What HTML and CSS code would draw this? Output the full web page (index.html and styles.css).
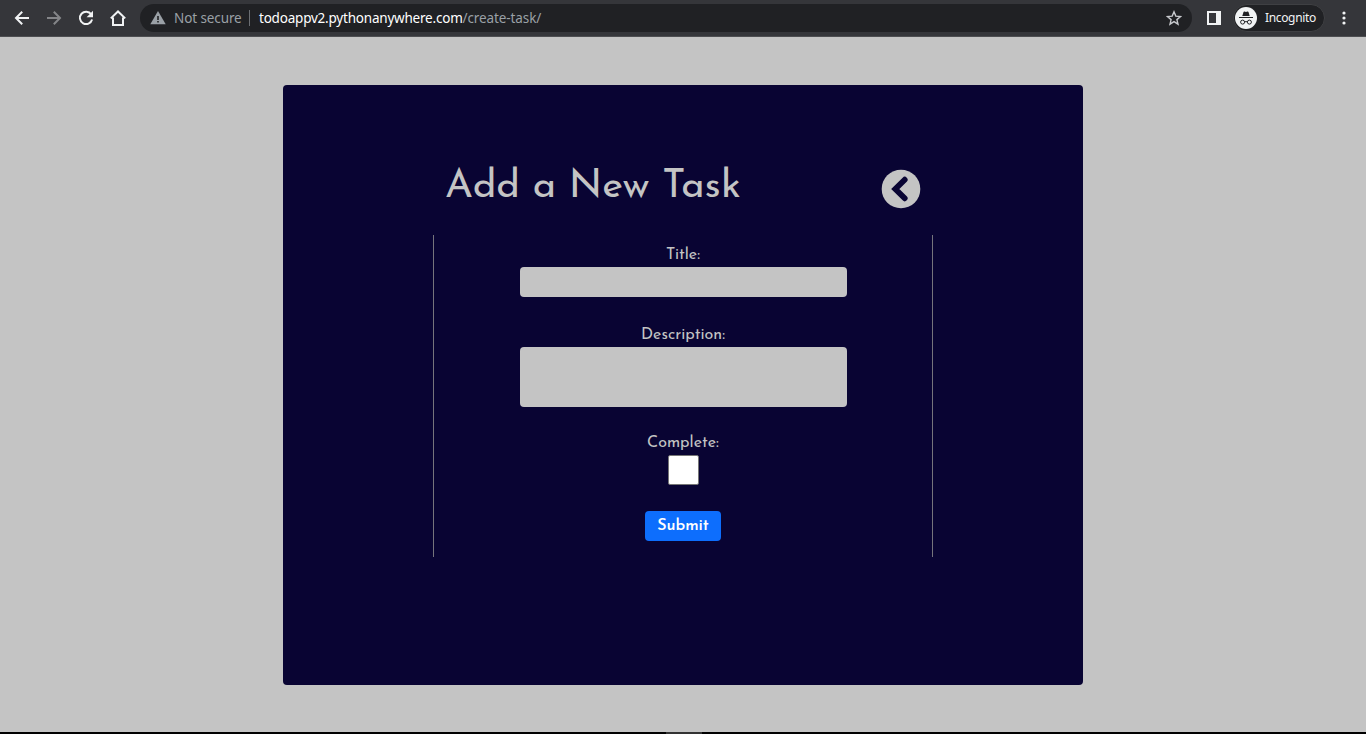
FILE: index.html
```html
<!DOCTYPE html>
<html lang="en">
<head>
<meta charset="utf-8">
<title>Add a New Task</title>
<link rel="stylesheet" href="styles.css">
</head>
<body>
<header class="toolbar">
  <nav class="nav">
    <svg width="16" height="16" viewBox="0 0 16 16"><path class="line" d="M15 8H2.5M8.2 1.7 2 8l6.2 6.3"/></svg>
    <svg class="dim" width="16" height="16" viewBox="0 0 16 16"><path class="line" d="M1 8h12.5M7.8 1.7 14 8l-6.2 6.3"/></svg>
    <svg width="16" height="16" viewBox="0 0 16 16"><path class="line" d="M13.2 4.3A6.2 6.2 0 1 0 14.1 9.5"/><path class="fill" d="M15 .8v6.4H8.6z"/></svg>
    <svg width="16" height="16" viewBox="0 0 16 16"><path class="line" d="M.8 8.4 8 1.5l7.2 6.9M3 7.5v7.4h10V7.5"/></svg>
  </nav>
  <div class="address">
    <svg class="warning" width="16" height="14" viewBox="0 0 16 14"><path fill="#9aa0a6" d="M8 0 15.7 13.3H.3z"/><path fill="#202124" d="M7.2 5h1.6v4H7.2zM7.2 10h1.6v1.6H7.2z"/></svg>
    <span class="secure">Not secure</span>
    <span class="divider"></span>
    <span class="url"><span class="host">todoappv2.pythonanywhere.com</span><span class="path">/create-task/</span></span>
    <svg class="star" width="16" height="16" viewBox="0 0 16 16"><path fill="none" stroke="#c8cace" stroke-width="1.4" d="m8 1.8 1.8 4.3 4.7.4-3.6 3.1 1.1 4.6L8 11.7l-4 2.5 1.1-4.6-3.6-3.1 4.7-.4z"/></svg>
  </div>
  <svg class="panel" width="14" height="14" viewBox="0 0 14 14"><path fill="#f1f3f4" fill-rule="evenodd" d="M0 0h14v14H0zM2 2v10h7V2z"/></svg>
  <div class="profile">
    <svg width="22" height="22" viewBox="0 0 22 22"><circle cx="11" cy="11" r="11" fill="#f1f3f4"/><path fill="#202124" d="M7.3 9 8.5 5q.3-.8 1.1-.5l1.4.4 1.4-.4q.8-.3 1.1.5L14.7 9zM4 10h14v1.1H4z"/><path fill="none" stroke="#202124" d="M9.8 14.9q1.2-.7 2.4 0"/><circle cx="7.6" cy="15.1" r="2" fill="none" stroke="#202124"/><circle cx="14.4" cy="15.1" r="2" fill="none" stroke="#202124"/></svg>
    <span class="profile-name">Incognito</span>
  </div>
  <svg class="menu" width="4" height="14" viewBox="0 0 4 14"><g fill="#f1f3f4"><circle cx="2" cy="2" r="1.6"/><circle cx="2" cy="7" r="1.6"/><circle cx="2" cy="12" r="1.6"/></g></svg>
</header>
<main class="page">
  <section class="card">
    <div class="heading">
      <h1 class="title">Add a New Task</h1>
      <svg width="40" height="40" viewBox="0 0 40 40"><circle cx="20" cy="20" r="19.3" fill="#c4c4c4"/><path fill="none" stroke="#090433" stroke-width="5.8" stroke-linecap="round" stroke-linejoin="miter" d="M23.7 10.7 14.3 20l9.4 9.3"/></svg>
    </div>
    <form class="form">
      <label class="label label-title" for="title">Title:</label>
      <input class="field" id="title" type="text">
      <label class="label label-description" for="description">Description:</label>
      <textarea class="field field-tall" id="description"></textarea>
      <label class="label label-complete" for="complete">Complete:</label>
      <input class="check" id="complete" type="checkbox">
      <button class="submit" type="button">Submit</button>
    </form>
  </section>
</main>
<footer class="edge"><span class="handle"></span></footer>
</body>
</html>
```
FILE: styles.css
```css
* { box-sizing: border-box; }
body {
  margin: 0;
  height: 734px;
  display: flex;
  flex-direction: column;
  overflow: hidden;
  background: #c4c4c4;
  font-family: "Josefin Sans", Lato, sans-serif;
}
svg { display: block; flex: none; }
.toolbar {
  height: 37px;
  flex: none;
  display: flex;
  align-items: center;
  padding: 0 0 1px 14px;
  background: #35363a;
  border-bottom: 1px solid #4d4e51;
  font-family: "Noto Sans", sans-serif;
}
.nav { display: flex; flex: none; gap: 16px; width: 126px; }
.line { fill: none; stroke: #f1f3f4; stroke-width: 2; }
.fill { fill: #f1f3f4; }
.dim { opacity: .42; }
.address {
  width: 1052px;
  height: 28px;
  flex: none;
  display: flex;
  align-items: center;
  padding: 0 10px;
  border-radius: 14px;
  background: #202124;
  font-size: 13.5px;
  line-height: 20px;
  white-space: nowrap;
}
.secure { margin-left: 8px; width: 67px; color: #9aa0a6; letter-spacing: -.1px; }
.divider { width: 1px; height: 16px; margin: 0 9px 0 8px; background: #6c6f73; }
.host { color: #fff; letter-spacing: -.21px; }
.path { color: #9aa0a6; letter-spacing: -.1px; }
.star { margin-left: auto; }
.panel { margin-left: 15px; }
.profile {
  display: flex;
  flex: none;
  align-items: center;
  width: 92px;
  height: 28px;
  margin-left: 12px;
  padding-left: 1px;
  border: 1px solid #3f4043;
  border-radius: 14px;
  background: #202124;
}
.profile-name { margin-left: 8px; color: #f1f3f4; font-size: 12px; letter-spacing: -.35px; }
.menu { margin-left: 17px; }
.page { flex: 1; display: flex; justify-content: center; padding-top: 48px; }
.card {
  width: 800px;
  height: 600px;
  padding: 70px 150px;
  border-radius: 4px;
  background: #090433;
  color: #c4c4c4;
}
.heading {
  height: 80px;
  display: flex;
  justify-content: space-between;
  padding: 14px 12px 0;
}
.title { margin: -6px 0 0; font-size: 40px; line-height: 48px; font-weight: 400; white-space: nowrap; }
.form {
  height: 322px;
  display: flex;
  flex-direction: column;
  align-items: center;
  padding-top: 8px;
  border: solid #75747c;
  border-width: 0 1px;
}
.label { height: 24px; font-size: 16px; line-height: 24px; }
.field {
  width: 327px;
  height: 30px;
  margin: 0 0 26px;
  padding: 4px 8px;
  border: 0;
  border-radius: 4px;
  background: #c4c4c4;
  resize: none;
}
.field-tall { height: 60px; margin-bottom: 24px; }
.check {
  appearance: none;
  width: 31px;
  height: 30px;
  margin: 0 0 26px;
  border: 1px solid #767676;
  border-radius: 2px;
  background: #fff;
}
.submit {
  width: 76px;
  height: 30px;
  padding: 0;
  border: 0;
  border-radius: 4px;
  background: #0d6efd;
  color: #fff;
  font: 600 16px/24px "Josefin Sans", Lato, sans-serif;
}
.edge { height: 2px; flex: none; background: #000; display: flex; justify-content: center; }
.handle { width: 36px; height: 2px; background: #333; margin-left: 2px; }
```
